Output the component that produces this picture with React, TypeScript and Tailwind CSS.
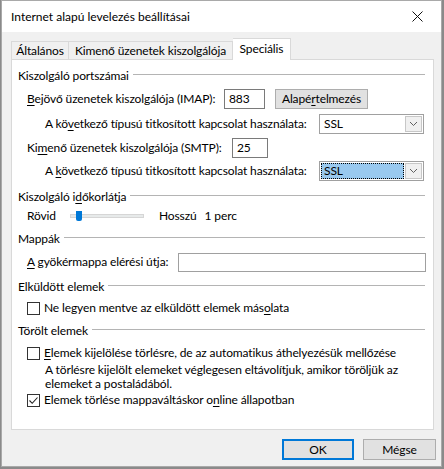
import React from "react";

const U = ({ children }: { children: React.ReactNode }) => (
  <span className="underline underline-offset-[2px] decoration-1">{children}</span>
);

function Header({ children, mt }: { children: React.ReactNode; mt: string }) {
  return (
    <div className={`flex items-center h-[16px] pl-[6px] pr-[8px] ${mt}`}>
      <span className="whitespace-nowrap">{children}</span>
      <div className="flex-1 h-px bg-[#b4b4b4] ml-[4px] mb-[3px]" />
    </div>
  );
}

function Chevron() {
  return (
    <svg width="9" height="6" viewBox="0 0 9 6">
      <path d="M1 1 L4.5 4.5 L8 1" fill="none" stroke="#606060" strokeWidth="1" />
    </svg>
  );
}

function Select({ active }: { active?: boolean }) {
  return (
    <div className="w-[105px] h-[20px] border border-[#a0a0a0] bg-white flex items-center p-[1px]">
      {active ? (
        <div className="flex-1 h-full bg-[#99c9ef] border border-dotted border-[#000] flex items-center pl-[2px]">SSL</div>
      ) : (
        <div className="flex-1 h-full flex items-center pl-[3px]">SSL</div>
      )}
      <div className="w-[17px] h-full ml-[1px] border border-[#c7c7c7] bg-[#f0f0f0] flex items-center justify-center">
        <Chevron />
      </div>
    </div>
  );
}

function Checkbox({ checked }: { checked?: boolean }) {
  return (
    <div className="w-[13px] h-[13px] border border-[#333333] bg-white flex items-center justify-center shrink-0">
      {checked && (
        <svg width="11" height="11" viewBox="0 0 11 11">
          <path d="M1.5 5.5 L4.2 8.3 L9.5 2.5" fill="none" stroke="#222" strokeWidth="1.1" />
        </svg>
      )}
    </div>
  );
}

export default function App() {
  return (
    <div
      className="w-[444px] h-[469px] bg-[#8a8a8a] text-[12px] text-black leading-none tracking-[-0.12px]"
      style={{ fontFamily: '"Segoe UI", Lato, "Noto Sans", sans-serif' }}
    >
      <div className="ml-[1px] w-[441px] h-[467px] border border-[#a9a9a9] flex flex-col bg-[#f0f0f0]">
        {/* title bar */}
        <div className="h-[31px] bg-white flex items-center pl-[9px] shrink-0">
          <span className="flex-1 tracking-normal">Internet alapú levelezés beállításai</span>
          <div className="w-[46px] h-full flex items-center justify-center mr-[1px]">
            <svg width="11" height="11" viewBox="0 0 11 11">
              <path d="M0.5 0.5 L10.5 10.5 M10.5 0.5 L0.5 10.5" stroke="#111" strokeWidth="1" />
            </svg>
          </div>
        </div>
        {/* body */}
        <div className="flex-1 px-[9px] pt-[6px]">
          {/* tabs */}
          <div className="flex items-end h-[21px] whitespace-nowrap">
            <div className="h-[18px] border border-[#d9d9d9] border-b-0 flex items-center w-[58px] justify-center">Általános</div>
            <div className="h-[18px] border border-[#d9d9d9] border-b-0 border-l-0 flex items-center w-[164px] justify-center">Kimenő üzenetek kiszolgálója</div>
            <div className="h-[22px] -mb-px bg-white border border-[#d9d9d9] border-b-0 border-l-0 flex items-start pt-[4px] w-[58px] justify-center relative z-10">Speciális</div>
          </div>
          {/* panel */}
          <div className="w-[423px] h-[371px] bg-white border border-[#d9d9d9] flex flex-col pt-[8px]">
            <Header mt="">Kiszolgáló portszámai</Header>
            {/* IMAP */}
            <div className="flex items-center h-[20px] mt-[5px] pl-[15px]">
              <span className="w-[197px] whitespace-nowrap"><U>B</U>ejövő üzenetek kiszolgálója (IMAP):</span>
              <div className="w-[41px] h-[20px] border border-[#7a7a7a] flex items-center pl-[4px]">883</div>
              <div className="ml-[10px] w-[93px] h-[20px] border border-[#adadad] bg-[#e1e1e1] flex items-center justify-center">Alapé<U>r</U>telmezés</div>
            </div>
            <div className="flex items-center h-[20px] mt-[5px] pl-[33px]">
              <span className="w-[274px] whitespace-nowrap">A kö<U>v</U>etkező típusú titkosított kapcsolat használata:</span>
              <Select />
            </div>
            {/* SMTP */}
            <div className="flex items-center h-[20px] mt-[4px] pl-[15px]">
              <span className="w-[205px] whitespace-nowrap">Ki<U>m</U>enő üzenetek kiszolgálója (SMTP):</span>
              <div className="w-[36px] h-[20px] border border-[#7a7a7a] flex items-center pl-[4px]">25</div>
            </div>
            <div className="flex items-center h-[20px] mt-[3px] pl-[33px]">
              <span className="w-[274px] whitespace-nowrap">A <U>k</U>övetkező típusú titkosított kapcsolat használata:</span>
              <Select active />
            </div>
            <Header mt="mt-[8px]">
              Kiszolgáló i<U>d</U>őkorlátja
            </Header>
            {/* slider */}
            <div className="flex items-center h-[16px] mt-[3px] pl-[15px]">
              <span className="w-[43px]">Rövid</span>
              <div className="relative w-[74px] h-[4px] bg-[#e7eaea] border border-[#d6d6d6]">
                <div className="absolute left-[5px] top-[-4px] w-[6px] h-[10px] bg-[#0078d7] rounded-b-[2px]" />
              </div>
              <span className="ml-[15px]">Hosszú</span>
              <span className="ml-[8px]">1 perc</span>
            </div>
            <Header mt="mt-[7px]">Mappák</Header>
            <div className="flex items-center h-[20px] mt-[5px] pl-[15px]">
              <span className="w-[151px] whitespace-nowrap"><U>A</U> gyökérmappa elérési útja:</span>
              <div className="w-[248px] h-[19px] border border-[#a0a0a0]" />
            </div>
            <Header mt="mt-[7px]">Elküldött elemek</Header>
            <div className="flex items-center h-[16px] mt-[5px] pl-[15px]">
              <Checkbox />
              <span className="ml-[4px] whitespace-nowrap">Ne legyen mentve az elküldött elemek más<U>o</U>lata</span>
            </div>
            <Header mt="mt-[7px]">Törölt elemek</Header>
            <div className="flex items-center h-[16px] mt-[6px] pl-[15px]">
              <Checkbox />
              <span className="ml-[4px] whitespace-nowrap"><U>E</U>lemek kijelölése törlésre, de az automatikus áthelyezésük mellőzése</span>
            </div>
            <div className="mt-[1px] pl-[33px] leading-[14px] pt-[1px]">
              <div className="whitespace-nowrap">A törlésre kijelölt elemeket véglegesen eltávolítjuk, amikor töröljük az</div>
              <div className="whitespace-nowrap">elemeket a postaládából.</div>
            </div>
            <div className="flex items-center h-[16px] mt-[1px] pl-[15px]">
              <Checkbox checked />
              <span className="ml-[4px] whitespace-nowrap">Elemek törlése mappaváltáskor o<U>n</U>line állapotban</span>
            </div>
          </div>
          {/* buttons */}
          <div className="flex justify-end gap-[9px] mt-[9px] w-[425px]">
            <div className="w-[72px] h-[21px] border-2 border-[#0078d7] bg-[#e1e1e1] flex items-center justify-center">OK</div>
            <div className="w-[73px] h-[21px] border border-[#adadad] bg-[#e1e1e1] flex items-center justify-center">Mégse</div>
          </div>
        </div>
      </div>
    </div>
  );
}
